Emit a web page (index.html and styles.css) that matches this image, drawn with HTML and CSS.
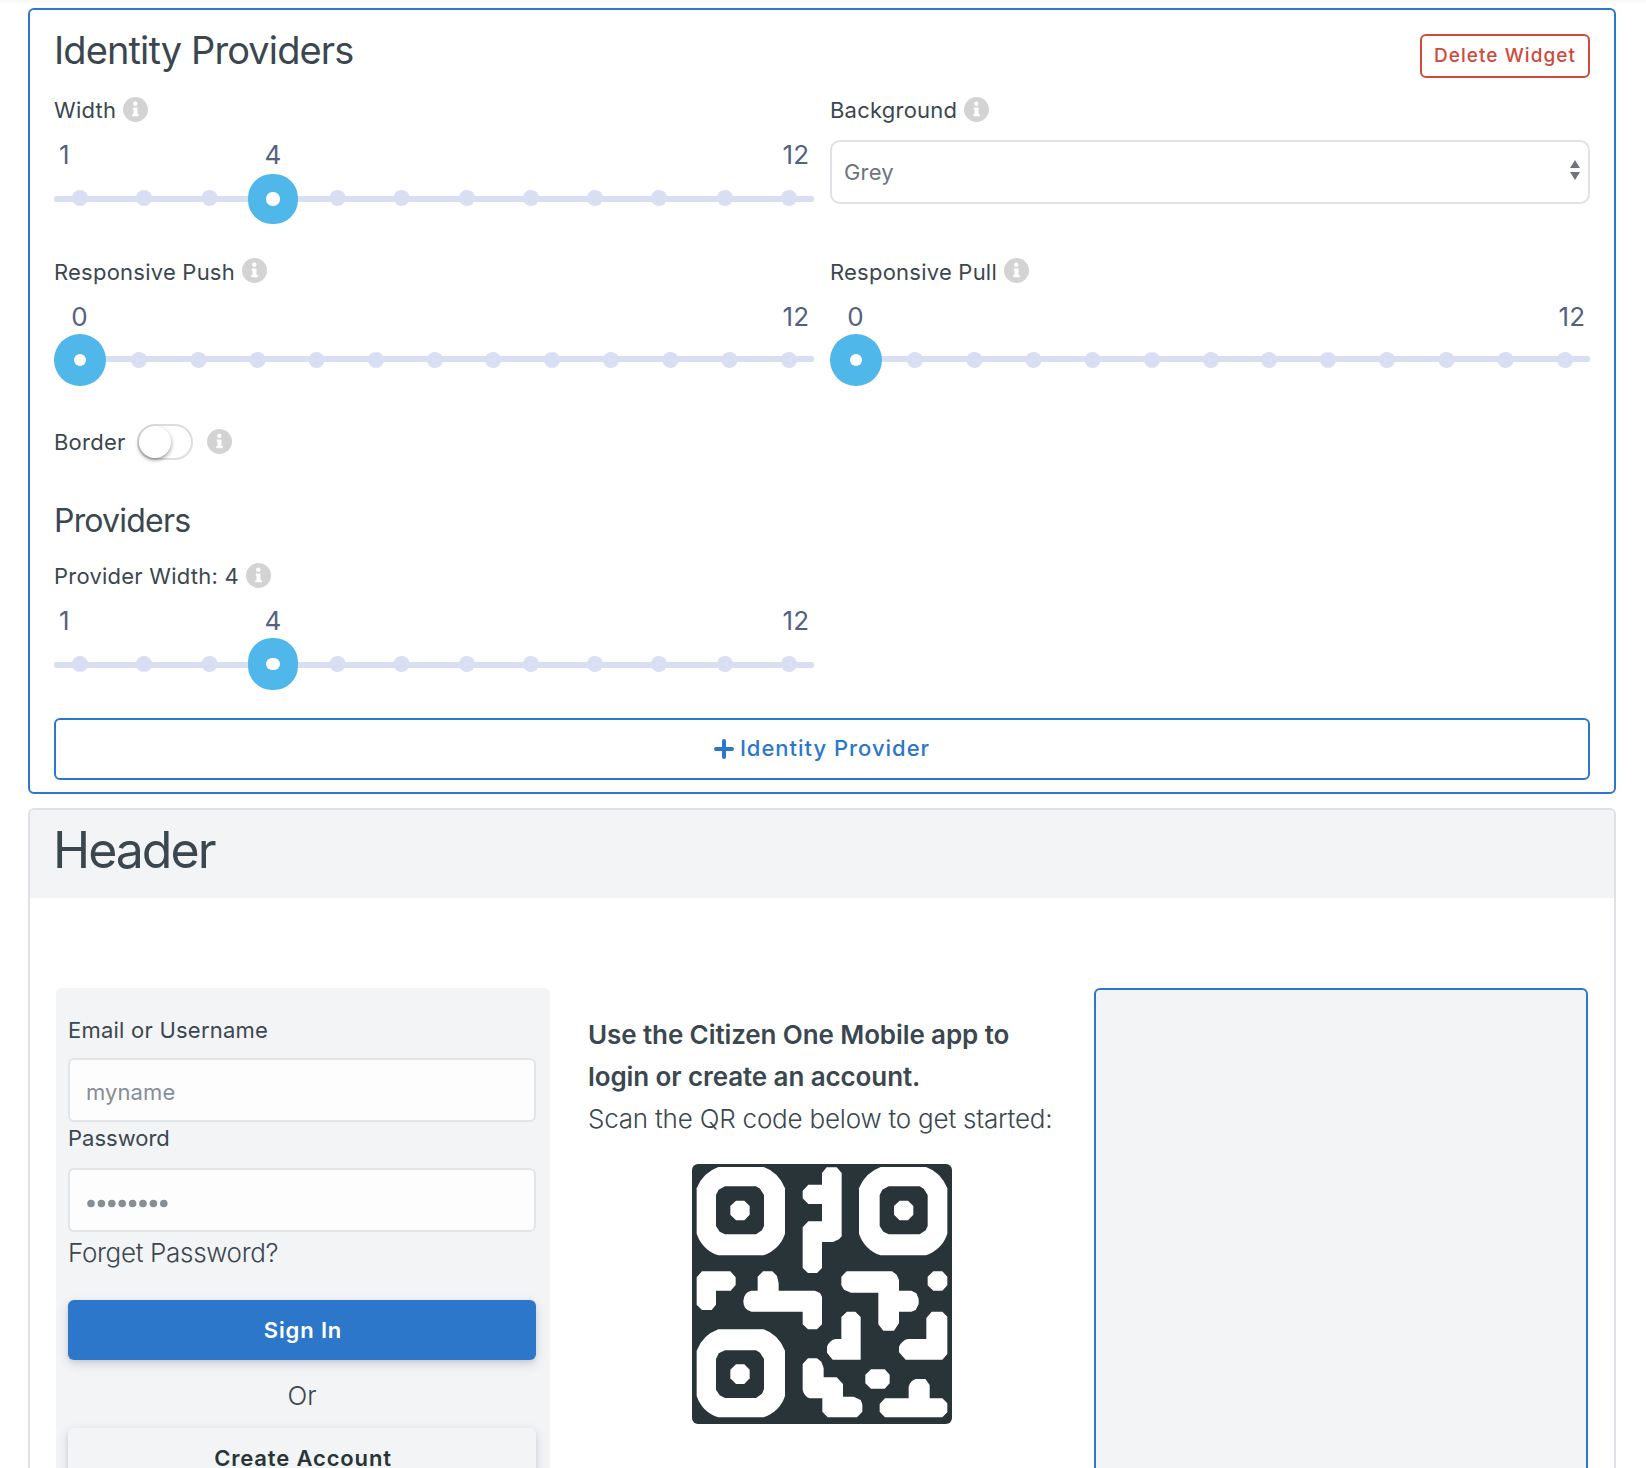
FILE: index.html
```
<!DOCTYPE html>
<html lang="en">
<head>
<meta charset="utf-8">
<title>Identity Providers</title>
<link rel="stylesheet" href="styles.css">
</head>
<body>
<svg width="0" height="0" class="defs">
  <defs>
    <symbol id="info" viewBox="0 0 24 24">
      <circle cx="12" cy="12" r="12" fill="#d3d3d3"/>
      <circle cx="11.8" cy="6.5" r="2.1" fill="#fff"/>
      <path d="M9.4 10h4.5v6.2h1.2v2.3H8.9v-2.3h1.2v-3.9h-.7z" fill="#fff"/>
    </symbol>
    <g id="ticks12" fill="#d9dff2">
      <circle cx="26" cy="28" r="8"/><circle cx="90" cy="28" r="8"/><circle cx="155.500" cy="28" r="8"/><circle cx="283.500" cy="28" r="8"/><circle cx="347.500" cy="28" r="8"/><circle cx="413" cy="28" r="8"/><circle cx="477" cy="28" r="8"/><circle cx="541" cy="28" r="8"/><circle cx="605" cy="28" r="8"/><circle cx="671" cy="28" r="8"/><circle cx="735" cy="28" r="8"/>
    </g>
    <g id="ticks13">
      <rect y="24" width="760" height="6" rx="2" fill="#d9dff2"/>
      <g fill="#d9dff2"><circle cx="85" cy="28" r="8"/><circle cx="144.500" cy="28" r="8"/><circle cx="203.500" cy="28" r="8"/><circle cx="262.500" cy="28" r="8"/><circle cx="322" cy="28" r="8"/><circle cx="381" cy="28" r="8"/><circle cx="439" cy="28" r="8"/><circle cx="498" cy="28" r="8"/><circle cx="557" cy="28" r="8"/><circle cx="616.500" cy="28" r="8"/><circle cx="675.500" cy="28" r="8"/><circle cx="735" cy="28" r="8"/></g>
      <circle cx="26" cy="28" r="26" fill="#50b7eb"/><circle cx="26" cy="28" r="6" fill="#fff"/>
    </g>
  </defs>
</svg>

<section class="card editor">
  <header class="editor-head">
    <h2 class="title">Identity Providers</h2>
    <button class="btn-delete">Delete Widget</button>
  </header>

  <div class="row">
    <div class="field">
      <div class="label"><span>Width</span><svg class="info"><use href="#info"/></svg></div>
      <div class="values"><span>1</span><span class="current at-4">4</span><span>12</span></div>
      <svg class="track" viewBox="0 0 760 58">
        <rect y="24" width="760" height="6" rx="2" fill="#d9dff2" transform="translate(0 2)"/>
        <use href="#ticks12"/>
        <rect x="194" y="4" width="50" height="50" rx="24" fill="#50b7eb"/>
        <rect x="212" y="22" width="14" height="14" rx="6.500" fill="#fff"/>
      </svg>
    </div>
    <div class="field">
      <div class="label"><span>Background</span><svg class="info"><use href="#info"/></svg></div>
      <div class="select"><span>Grey</span>
        <svg class="caret" viewBox="0 0 10 20"><path d="M5 0l5 8H0zM5 20l5-8H0z" fill="#6c757d"/></svg>
      </div>
    </div>
  </div>

  <div class="row row-push">
    <div class="field">
      <div class="label"><span>Responsive Push</span><svg class="info raised"><use href="#info"/></svg></div>
      <div class="values"><span class="current at-0">0</span><span class="last">12</span></div>
      <svg class="track" viewBox="0 0 760 58"><use href="#ticks13"/></svg>
    </div>
    <div class="field">
      <div class="label"><span>Responsive Pull</span><svg class="info raised"><use href="#info"/></svg></div>
      <div class="values"><span class="current at-0">0</span><span class="last">12</span></div>
      <svg class="track" viewBox="0 0 760 58"><use href="#ticks13"/></svg>
    </div>
  </div>

  <div class="label border-row"><span>Border</span><span class="toggle"><span class="knob"></span></span><svg class="info"><use href="#info"/></svg></div>

  <h3 class="subtitle">Providers</h3>
  <div class="row row-providers">
    <div class="field">
      <div class="label"><span>Provider Width: 4</span><svg class="info"><use href="#info"/></svg></div>
      <div class="values"><span>1</span><span class="current at-4">4</span><span>12</span></div>
      <svg class="track" viewBox="0 0 760 58">
        <rect y="26" width="760" height="6" rx="2" fill="#d9dff2"/>
        <use href="#ticks12"/>
        <rect x="194" y="2" width="50" height="52" rx="24" fill="#50b7eb"/>
        <rect x="212" y="22" width="14" height="12" rx="6" fill="#fff"/>
      </svg>
    </div>
  </div>
  <button class="btn-add">
    <svg class="plus" viewBox="0 0 20 20"><path d="M2 10h16M10 2v16" stroke="#2c77c9" stroke-width="4" stroke-linecap="round"/></svg>
    <span>Identity Provider</span>
  </button>
</section>

<section class="card preview">
  <header class="preview-head"><h1>Header</h1></header>
  <div class="columns">
    <div class="panel login">
      <label class="label" for="user">Email or Username</label>
      <input id="user" class="input" type="text" placeholder="myname">
      <label class="label label-pass">Password</label>
      <div class="input dots">
        <svg width="81" height="9" viewBox="0 0 81 9" fill="#868e96"><circle cx="4" cy="4.500" r="3.800"/><circle cx="14.400" cy="4.500" r="3.800"/><circle cx="24.800" cy="4.500" r="3.800"/><circle cx="35.200" cy="4.500" r="3.800"/><circle cx="45.600" cy="4.500" r="3.800"/><circle cx="56" cy="4.500" r="3.800"/><circle cx="66.400" cy="4.500" r="3.800"/><circle cx="76.800" cy="4.500" r="3.800"/></svg>
      </div>
      <a class="forget">Forget Password?</a>
      <button class="btn btn-primary">Sign In</button>
      <div class="or">Or</div>
      <button class="btn btn-light">Create Account</button>
    </div>
    <div class="qr-col">
      <p class="strong">Use the Citizen One Mobile app to<br>login or create an account.</p>
      <p class="light">Scan the QR code below to get started:</p>
      <svg class="qr" viewBox="36 42 780 780">
        <rect x="36" y="42" width="780" height="780" rx="18" fill="#293438"/>
        <path d="M115 51H251Q295 66 315 115V251Q300 297 251 316H115Q67 300 50 251V115Q68 68 115 51z" fill="#fff"/>
        <path d="M135 109H228L240 116L252 135V228L246 241L228 253H135L119 245L108 228V135L116 119z" fill="#293438"/>
        <path d="M168 152H193L209 168V194L193 211H168L151 194V168z" fill="#fff"/>
        <g transform="translate(0 487)">
          <path d="M115 51H251Q295 66 315 115V251Q300 297 251 315H115Q67 300 50 251V115Q68 68 115 51z" fill="#fff"/>
          <path d="M135 114H228L240 121L252 140V230L246 244L228 257H135L119 249L108 232V140L116 123z" fill="#293438"/>
          <path d="M168 156H193L209 172V198L193 215H168L151 198V172z" fill="#fff"/>
        </g>
        <path d="M602 51H738Q782 66 802 115V251Q787 297 738 316H602Q554 300 537 251V115Q555 68 602 51z" fill="#fff"/>
        <path d="M626 109H719L731 116L743 135V228L737 241L719 253H626L610 245L599 228V135L607 119z" fill="#293438"/>
        <path d="M659 152H684L700 168V194L684 211H659L642 194V168z" fill="#fff"/>
        <g fill="#fff">
          <path d="M440 52H470L485 69V259L477 268L459 276H426V354L411 369H384L368 354V232L385 214H426V162H385L368 145V122L385 104H426V69z"/>
          <path d="M66 364H151L167 382V405L152 422H108V464L95 480H66L50 464V382z"/>
          <path d="M249 364H277L291 378L296 400V422H405L420 429L426 440V523L411 538H384L368 523V485H214Q190 480 190 454Q191 427 214 422H233V380z"/>
          <path d="M500 364H636L650 374L657 390V422H694L709 430L716 446V462L707 480L694 485H657V519L642 542H610L595 523V428H513L492 419L484 406V380z"/>
          <path d="M760 364H787L802 380V406L787 422H760L743 406V380z"/>
          <path d="M501 485H526L542 501V629H458L441 608V590Q449 570 467 567H484V501z"/>
          <path d="M755 485H787L802 500V612L787 629H677L657 607V590Q667 570 684 567H739V504z"/>
          <path d="M384 625H411L424 635L431 654V682H470L489 702V740H521L542 750L547 763V785L531 802H443L427 785V745H389Q373 740 368 720V642z"/>
          <path d="M573 658H614L629 674V700L614 716H573L556 700V674z"/>
          <path d="M707 687H736L749 705V745H787L802 760V787L787 802H615L599 785V762L615 745H686V710Q692 691 707 687z"/>
        </g>
      </svg>
    </div>
    <div class="panel selected"></div>
  </div>
</section>
</body>
</html>
```
FILE: styles.css
```
* { box-sizing: border-box; }
html { height: 1468px; overflow: hidden; }
body {
  margin: 0;
  height: 1468px;
  overflow: hidden;
  padding: 8px 30px 0 28px;
  background: linear-gradient(#f7f7f7, #fefefe 5px, #fff 6px);
  font-family: Inter, "Liberation Sans", sans-serif;
  color: #3b474f;
}
h1, h2, h3, p { margin: 0; font-weight: 400; }
button { font-family: inherit; padding: 0; background: none; }
svg { display: block; }
.defs { position: absolute; }

.card { border: 2px solid #2c77c9; border-radius: 6px; background: #fff; }
.editor { height: 786px; padding: 24px 24px 0; }
.editor-head { display: flex; justify-content: space-between; align-items: flex-start; height: 44px; margin-bottom: 16px; }
.title { font-size: 38px; line-height: 32px; letter-spacing: -0.88px; }
.btn-delete {
  width: 170px; height: 44px;
  border: 2px solid #cf4a3b; border-radius: 6px;
  color: #cf4a3b; font-size: 19px; font-weight: 500; letter-spacing: 1.05px;
  line-height: 38px;
}

.row { display: grid; grid-template-columns: 760px 760px; column-gap: 16px; }
.row-push { margin-top: 28px; }
.label { display: flex; align-items: center; height: 32px; font-size: 22px; line-height: 32px; letter-spacing: 0.23px; white-space: nowrap; }
.info { width: 25px; height: 25px; margin: -2px 0 0 7px; }
.info.raised { margin-top: -4px; }
.values { position: relative; display: flex; justify-content: space-between; height: 32px; margin-top: 12px; padding: 0 5px; font-size: 26px; line-height: 33px; color: #55617e; }
.current { position: absolute; top: 0; width: 40px; text-align: center; }
.at-4 { left: 199px; }
.at-0 { left: 5.5px; }
.last { margin-left: auto; }
.track { width: 760px; height: 58px; }
.select { display: flex; align-items: center; justify-content: space-between; height: 64px; margin-top: 14px; padding: 0 8px 0 12px; border: 2px solid #dee2e6; border-radius: 10px; color: #6c757d; font-size: 22px; letter-spacing: 0.2px; }
.caret { width: 10px; height: 20px; margin-top: -4px; }

.border-row { height: 36px; margin-top: 34px; }
.border-row .info { margin-left: 14px; }
.toggle { width: 56px; height: 36px; margin-left: 12px; border: 2px solid #dedede; border-radius: 18px; }
.knob { display: block; width: 32px; height: 32px; border-radius: 50%; background: #fff; box-shadow: 0 2px 4px rgba(0, 0, 0, .4); }
.subtitle { margin-top: 43px; font-size: 32px; line-height: 36px; letter-spacing: -0.8px; }
.row-providers { margin-top: 21px; }
.btn-add {
  display: flex; align-items: center; justify-content: center; gap: 6px;
  width: 100%; height: 62px; margin-top: 24px; padding-bottom: 2px;
  border: 2px solid #2c77c9; border-radius: 6px;
  color: #2c77c9; font-size: 22px; font-weight: 500; letter-spacing: 0.98px;
}
.plus { width: 20px; height: 20px; margin-top: 2px; }

.preview { height: 700px; margin-top: 14px; border-color: #dee2e6; }
.preview-head { height: 88px; padding-left: 23px; background: #f3f4f6; border-radius: 4px 4px 0 0; }
.preview-head h1 { font-size: 50px; line-height: 80px; letter-spacing: -2px; }
.columns { display: grid; grid-template-columns: 494px 494px 494px; column-gap: 25px; margin-top: 90px; padding-left: 26px; }
.panel { height: 520px; border-radius: 6px; background: #f3f4f6; }
.selected { border: 2px solid #2c77c9; }
.login { padding: 26px 14px 0 12px; }
.input { display: block; width: 468px; height: 64px; margin-top: 12px; padding: 4px 16px 0; border: 2px solid #e2e5e8; border-radius: 6px; background: #fdfdfd; font: 22px Inter, sans-serif; letter-spacing: 0.1px; outline: none; }
.input::placeholder { color: #868e96; opacity: 1; }
.label-pass { letter-spacing: 0; }
.dots { display: flex; align-items: center; margin-top: 14px; padding: 6px 17px 0; }
.forget { display: block; margin-top: 4px; font-size: 26px; font-weight: 300; line-height: 34px; letter-spacing: -0.33px; }
.btn { display: block; width: 468px; height: 60px; padding-left: 2px; border: 0; border-radius: 6px; font-size: 22px; font-weight: 600; letter-spacing: 0.85px; box-shadow: 0 4px 12px rgba(50, 50, 93, .16), 0 2px 4px rgba(0, 0, 0, .08); }
.btn-primary { margin-top: 30px; background: #2c77c9; color: #fff; }
.or { height: 68px; line-height: 71px; text-align: center; font-size: 26px; font-weight: 300; }
.btn-light { background: #f3f4f6; color: #293438; }
.qr-col { padding: 26px 0 0 13px; font-size: 26px; line-height: 42px; white-space: nowrap; }
.strong { font-weight: 600; letter-spacing: -0.1px; }
.light { font-weight: 300; letter-spacing: -0.21px; }
.qr { width: 260px; height: 260px; margin: 24px 0 0 104px; }
```
